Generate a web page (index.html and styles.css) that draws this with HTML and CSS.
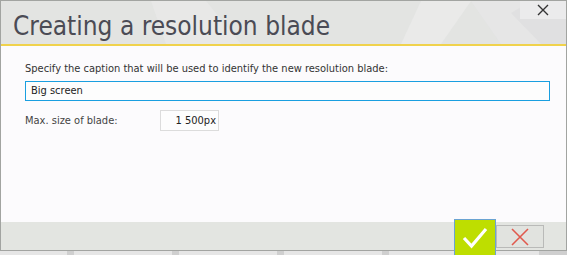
FILE: index.html
```html
<!DOCTYPE html>
<html>
<head>
<meta charset="utf-8">
<link rel="stylesheet" href="styles.css">
</head>
<body>
<div class="window">
  <div class="titlebar">
    <svg class="bgshapes" width="565" height="43" viewBox="0 0 565 43">
      <polygon points="150,0 205,0 240,43 165,43" fill="#e9e9e9" opacity="0.7"/>
      <polygon points="420,0 470,0 440,43 400,43" fill="#ebebeb" opacity="0.8"/>
      <polygon points="470,0 565,0 565,43 500,43" fill="#e6e6e7" opacity="0.9"/>
      <polygon points="540,43 510,12 530,0 565,0 565,43" fill="#dcdcdd" opacity="0.6"/>
    </svg>
    <h1 class="title">Creating a resolution blade</h1>
    <button class="close" aria-label="Close">
      <svg width="12" height="12" viewBox="0 0 12 12"><path d="M1 1 L11 11 M11 1 L1 11" stroke="#333" stroke-width="1.4"/></svg>
    </button>
  </div>
  <div class="content">
    <label class="caption">Specify the caption that will be used to identify the new resolution blade:</label>
    <div class="textbox">Big screen</div>
    <div class="row">
      <span class="rowlabel">Max. size of blade:</span>
      <div class="numbox">1 500px</div>
    </div>
  </div>
  <div class="footer">
    <button class="ok" aria-label="OK">
      <svg width="26" height="22" viewBox="0 0 26 22"><path d="M2 11 L9.5 19 L24 2" fill="none" stroke="#fff" stroke-width="3.2"/></svg>
    </button>
    <button class="cancel" aria-label="Cancel">
      <svg width="18" height="18" viewBox="0 0 18 18"><path d="M1 1 L17 17 M17 1 L1 17" stroke="#e05a4e" stroke-width="1.6"/></svg>
    </button>
  </div>
</div>
<div class="strip">
  <span class="tab w1"></span><span class="tab w2"></span><span class="tab w2"></span><span class="tab w2"></span><span class="tab w3"></span>
</div>
</body>
</html>
```
FILE: styles.css
```css
html, body { margin: 0; padding: 0; }
body {
  width: 567px;
  height: 255px;
  overflow: hidden;
  background: #d9d9d9;
  font-family: "DejaVu Sans", sans-serif;
}
.window {
  width: 567px;
  height: 251px;
  box-sizing: border-box;
  border: 1px solid #a2a4a1;
  display: flex;
  flex-direction: column;
  background: #fcfbfd;
  position: relative;
}
.titlebar {
  height: 43px;
  border-bottom: 2px solid #f0d24c;
  background: #e3e4e2;
  position: relative;
  overflow: hidden;
}
.bgshapes { position: absolute; left: 0; top: 0; }
.title {
  position: relative;
  margin: 0;
  padding: 10px 0 0 12px;
  font-family: "DejaVu Sans Condensed", "DejaVu Sans", sans-serif;
  font-weight: normal;
  font-size: 26px;
  line-height: 30px;
  color: #4b4b55;
}
.close {
  position: absolute;
  right: 0;
  top: 0;
  width: 46px;
  height: 18px;
  border: 0;
  padding: 0;
  background: #ebebec;
  display: flex;
  align-items: center;
  justify-content: center;
}
.content {
  flex: 1;
  padding: 16px 16px 0 24px;
  font-family: "DejaVu Sans Condensed", "DejaVu Sans", sans-serif;
  font-size: 11px;
  color: #333;
}
.caption { display: block; line-height: 14px; }
.textbox {
  margin-top: 5px;
  height: 20px;
  box-sizing: border-box;
  border: 1px solid #1a9fe0;
  background: #fdfdfd;
  padding: 0 5px;
  line-height: 18px;
  color: #222;
}
.row {
  display: flex;
  align-items: center;
  margin-top: 9px;
}
.rowlabel { width: 135px; color: #444; }
.numbox {
  width: 59px;
  height: 21px;
  box-sizing: border-box;
  border: 1px solid #dcdcdc;
  background: #fdfdfd;
  text-align: right;
  padding-right: 2px;
  line-height: 19px;
  color: #222;
}
.footer {
  height: 28px;
  background: #e3e5e1;
  display: flex;
  justify-content: flex-end;
  align-items: flex-start;
  padding-right: 22px;
}
.ok {
  margin-top: -3px;
  width: 42px;
  height: 37px;
  box-sizing: border-box;
  border: 1px solid #6aa3d2;
  background: #bede00;
  display: flex;
  align-items: center;
  justify-content: center;
  padding: 0;
  position: relative;
  z-index: 2;
}
.cancel {
  margin-top: 3px;
  width: 48px;
  height: 23px;
  box-sizing: border-box;
  border: 1px solid #b9bab8;
  background: #e1e3df;
  display: flex;
  align-items: center;
  justify-content: center;
  padding: 0;
}
.strip {
  height: 4px;
  display: flex;
  background: #cfcfcf;
}
.tab { height: 4px; background: #e6e6e6; margin-right: 7px; }
.w1 { width: 67px; }
.w2 { width: 98px; }
.w3 { width: 150px; }
```
